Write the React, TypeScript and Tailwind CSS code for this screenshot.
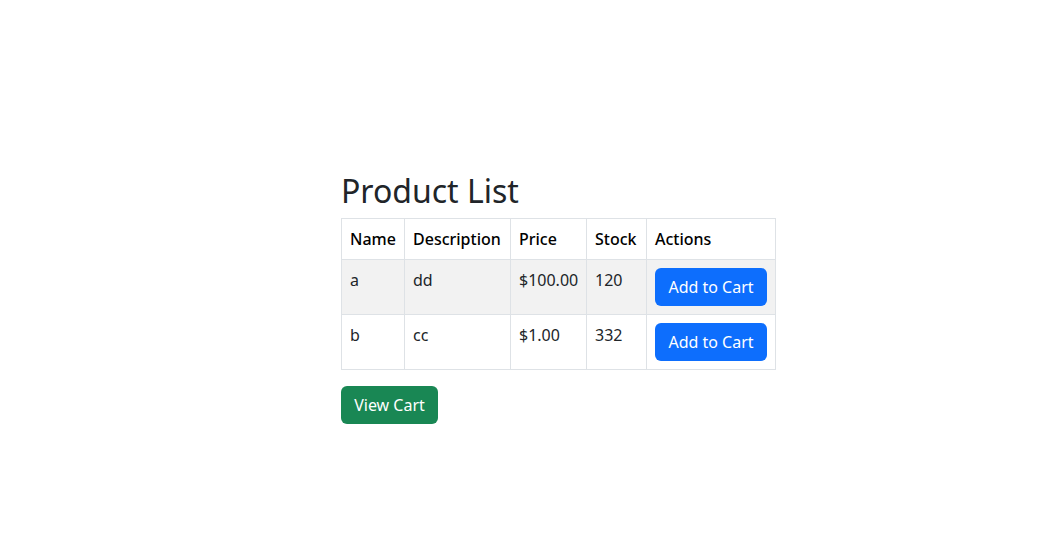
import React from 'react';

interface Product {
    name: string;
    description: string;
    price: number;
    stock: number;
}

const PRODUCTS: Product[] = [
    { name: 'a', description: 'dd', price: 100, stock: 120 },
    { name: 'b', description: 'cc', price: 1, stock: 332 },
];

export default function App() {
    return (
        <div className="min-h-[552px] bg-white pt-[172px] pl-[341px] text-[#212529] font-['Segoe_UI','Noto_Sans',sans-serif]">
            <h2 className="text-[32px] leading-[38px] font-normal mb-2">Product List</h2>

            {/* Products table */}
            <table className="table-fixed border-collapse w-[434px] text-base leading-6 mb-4">
                <colgroup>
                    <col className="w-[63px]" />
                    <col className="w-[106px]" />
                    <col className="w-[76px]" />
                    <col className="w-[60px]" />
                    <col className="w-[129px]" />
                </colgroup>
                <thead>
                    <tr>
                        {['Name', 'Description', 'Price', 'Stock', 'Actions'].map(h => (
                            <th key={h} className="border border-[#dee2e6] p-2 text-left align-bottom font-medium text-black whitespace-nowrap">
                                {h}
                            </th>
                        ))}
                    </tr>
                </thead>
                <tbody>
                    {PRODUCTS.map((p, i) => (
                        <tr key={p.name} className={i % 2 === 0 ? 'bg-[#f2f2f2]' : 'bg-white'}>
                            <td className="border border-[#dee2e6] p-2 align-top">{p.name}</td>
                            <td className="border border-[#dee2e6] p-2 align-top">{p.description}</td>
                            <td className="border border-[#dee2e6] p-2 align-top whitespace-nowrap">${p.price.toFixed(2)}</td>
                            <td className="border border-[#dee2e6] p-2 align-top">{p.stock}</td>
                            <td className="border border-[#dee2e6] p-2 align-top">
                                <button className="h-[38px] w-[112px] rounded-md bg-[#0d6efd] text-white whitespace-nowrap">
                                    Add to Cart
                                </button>
                            </td>
                        </tr>
                    ))}
                </tbody>
            </table>

            <button className="h-[38px] w-[97px] rounded-md bg-[#198754] text-white whitespace-nowrap">View Cart</button>
        </div>
    );
}
